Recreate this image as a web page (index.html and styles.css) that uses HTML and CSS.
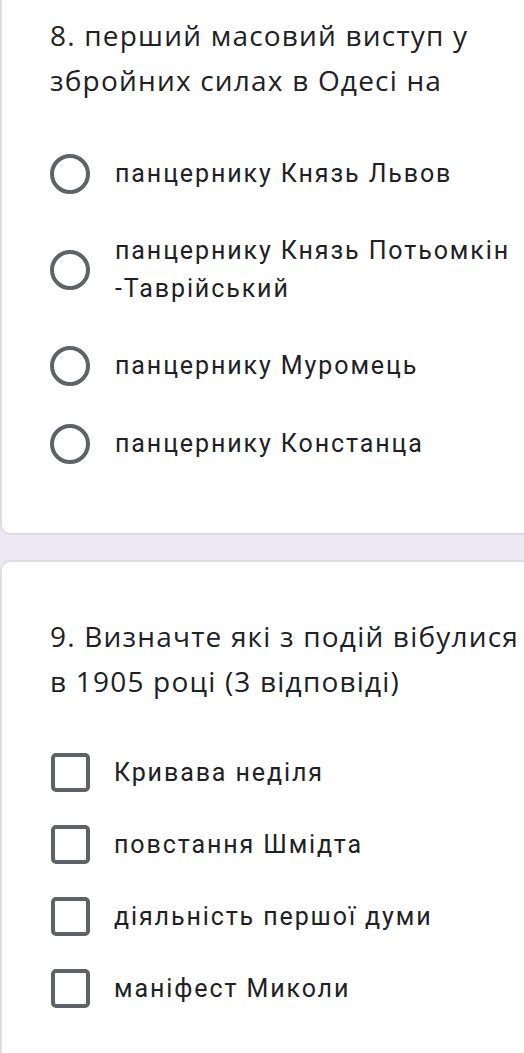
FILE: index.html
```html
<!DOCTYPE html>
<html lang="uk">
<head>
<meta charset="utf-8">
<title>Форма</title>
<link rel="stylesheet" href="styles.css">
</head>
<body>
<div class="page">
  <section class="card card-first">
    <h2 class="question">8. перший масовий виступ у збройних силах в Одесі на</h2>
    <ul class="options">
      <li class="option"><span class="radio"></span><span class="label">панцернику Князь Львов</span></li>
      <li class="option"><span class="radio"></span><span class="label">панцернику Князь Потьомкін -Таврійський</span></li>
      <li class="option"><span class="radio"></span><span class="label">панцернику Муромець</span></li>
      <li class="option"><span class="radio"></span><span class="label">панцернику Констанца</span></li>
    </ul>
  </section>
  <section class="card card-second">
    <h2 class="question">9. Визначте які з подій вібулися в 1905 році (3 відповіді)</h2>
    <ul class="options checks">
      <li class="option"><span class="checkbox"></span><span class="label">Кривава неділя</span></li>
      <li class="option"><span class="checkbox"></span><span class="label">повстання Шмідта</span></li>
      <li class="option"><span class="checkbox"></span><span class="label">діяльність першої думи</span></li>
      <li class="option"><span class="checkbox"></span><span class="label">маніфест Миколи</span></li>
    </ul>
  </section>
</div>
</body>
</html>
```

FILE: styles.css
```css
html, body {
  margin: 0;
  padding: 0;
  background: #edeaf6;
  overflow: hidden;
}
body {
  width: 524px;
  height: 1053px;
}
.page {
  display: flex;
  flex-direction: column;
  gap: 25px;
}
.card {
  background: #ffffff;
  border: 2px solid #dddce2;
  border-right: none;
  border-radius: 10px 0 0 10px;
  margin-right: -20px;
  padding-left: 48px;
  padding-right: 20px;
}
.card-first {
  margin-top: -20px;
  padding-top: 31px;
  padding-bottom: 50px;
}
.card-second {
  padding-top: 52px;
  padding-bottom: 60px;
}
.question {
  margin: 0;
  font-family: "Open Sans", "Noto Sans", sans-serif;
  font-weight: 400;
  font-size: 28px;
  letter-spacing: 1.2px;
  line-height: 45px;
  color: #202124;
}
.options {
  list-style: none;
  margin: 32px 0 0 0;
  padding: 0;
}
.checks {
  margin-top: 33px;
}
.option {
  display: flex;
  align-items: center;
  gap: 25px;
  padding: 19px 0;
}
.checks .option {
  padding: 16px 0 17px;
}
.label {
  flex: 1;
  font-family: Roboto, "Liberation Sans", sans-serif;
  font-size: 25px;
  letter-spacing: 1.9px;
  line-height: 38px;
  color: #202124;
}
.radio {
  flex: none;
  width: 40px;
  height: 40px;
  box-sizing: border-box;
  border: 4px solid #5f6368;
  border-radius: 50%;
}
.checkbox {
  flex: none;
  width: 39px;
  height: 39px;
  box-sizing: border-box;
  border: 4px solid #5f6368;
  border-radius: 5px;
  margin-left: 1px;
  margin-right: -1px;
}
```
